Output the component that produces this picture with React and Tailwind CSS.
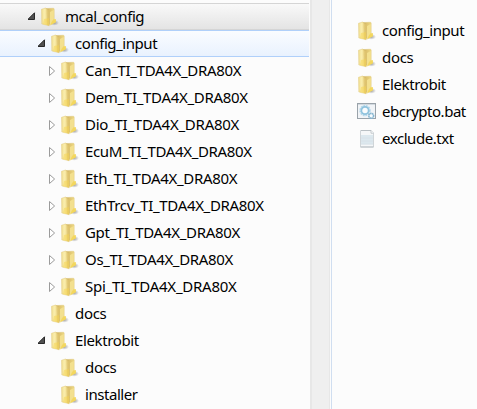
import React from "react";

const modules = [
  { name: "Can_TI_TDA4X_DRA80X", track: "tracking-[-0.32px]" },
  { name: "Dem_TI_TDA4X_DRA80X", track: "tracking-[-0.31px]" },
  { name: "Dio_TI_TDA4X_DRA80X", track: "tracking-[-0.26px]" },
  { name: "EcuM_TI_TDA4X_DRA80X", track: "tracking-[-0.34px]" },
  { name: "Eth_TI_TDA4X_DRA80X", track: "tracking-[-0.31px]" },
  { name: "EthTrcv_TI_TDA4X_DRA80X", track: "tracking-[-0.34px]" },
  { name: "Gpt_TI_TDA4X_DRA80X", track: "tracking-[-0.3px]" },
  { name: "Os_TI_TDA4X_DRA80X", track: "tracking-[-0.34px]" },
  { name: "Spi_TI_TDA4X_DRA80X", track: "tracking-[-0.26px]" },
];

const files = [
  { name: "config_input", track: "tracking-[-0.45px]", icon: Folder, inset: "pl-px" },
  { name: "docs", track: "tracking-[-0.3px]", icon: Folder, inset: "pl-px" },
  { name: "Elektrobit", track: "tracking-[-0.38px]", icon: Folder, inset: "pl-px" },
  { name: "ebcrypto.bat", track: "tracking-[-0.48px]", icon: BatIcon, inset: "" },
  { name: "exclude.txt", track: "tracking-[-0.45px]", icon: TextIcon, inset: "" },
];

function Folder() {
  return (
    <svg className="h-5 w-[18px] shrink-0" viewBox="0 0 18 20">
      <defs>
        <linearGradient id="cover" x1="0" x2="1" y1="0" y2="0">
          <stop offset="0" stopColor="#efdb8c" />
          <stop offset="0.35" stopColor="#faeeae" />
          <stop offset="1" stopColor="#ebd27a" />
        </linearGradient>
        <linearGradient id="page" x1="0" x2="1" y1="0" y2="0">
          <stop offset="0" stopColor="#bfa050" />
          <stop offset="0.45" stopColor="#dcc06c" />
          <stop offset="1" stopColor="#efda86" />
        </linearGradient>
        <radialGradient id="shade">
          <stop offset="0" stopColor="#777" stopOpacity="0.7" />
          <stop offset="1" stopColor="#777" stopOpacity="0" />
        </radialGradient>
      </defs>
      <ellipse cx="13.2" cy="15.8" rx="4.8" ry="2.9" fill="url(#shade)" />
      <path d="M3.8 1.6 12.6 1.2 13.2 2v13.3L8 17.6z" fill="url(#page)" stroke="#d8bf6e" strokeWidth="0.4" />
      <path d="M9 5 12.8 3v12.3L9 17.7z" fill="#f3e08f" />
      <path d="M12.2 12.6 14.8 12 15 15.2 9 18.4 10.6 15z" fill="#f3d75e" />
      <path d="M0.5 2.2 4.6 1 7.8 3.8 8.2 18.8 0.8 17z" fill="url(#cover)" stroke="#dfc673" strokeWidth="0.4" />
      <path d="M5.4 1.8 7.8 3.8 8.2 18.6 6 18z" fill="#cfae58" fillOpacity="0.4" />
      <path d="M3 12 8 11l.2 7.6L2 17.2z" fill="#f5d450" fillOpacity="0.5" />
    </svg>
  );
}

function Arrow({ open }) {
  return open ? (
    <svg className="h-[9px] w-[9px] shrink-0" viewBox="0 0 9 9">
      <path d="M6.5 0.8v6.7H-0.2z" fill="#505050" stroke="#292929" />
    </svg>
  ) : (
    <svg className="h-3 w-[9px] shrink-0" viewBox="0 0 9 12">
      <path d="M1.5 1.5 6.6 6 1.5 10.5z" fill="#fff" stroke="#9b9b9b" />
    </svg>
  );
}

function Row({ name, track, pad, arrow, tone = "" }) {
  return (
    <div className={`flex h-[27px] items-center ${pad} ${tone}`}>
      <span className="flex w-[13px] shrink-0">{arrow && <Arrow open={arrow === "open"} />}</span>
      <Folder />
      <span className={`ml-1.5 whitespace-nowrap ${track}`}>{name}</span>
    </div>
  );
}

function BatIcon() {
  return (
    <svg className="h-[18px] w-5" viewBox="0 0 20 18">
      <rect x="0.5" y="0.5" width="18" height="15" fill="#f1f4f7" stroke="#9aa3aa" />
      <path d="M1 1.5h17" stroke="#d3dae0" />
      <circle cx="8" cy="7.5" r="4.9" fill="none" stroke="#b4d8ea" strokeWidth="1.6" strokeDasharray="1.9 0.7" />
      <circle cx="8" cy="7.5" r="3.6" fill="#fafcfd" stroke="#8fc3de" strokeWidth="1.7" />
      <circle cx="14.2" cy="12.8" r="2.4" fill="#f8fcfe" stroke="#86b6d1" strokeWidth="1.6" strokeDasharray="1.5 0.3" />
    </svg>
  );
}

function TextIcon() {
  return (
    <svg className="h-[19px] w-5" viewBox="0 0 20 19">
      <path d="M3.5 1.5h10.7l2.3 2.5v14h-13z" fill="#f5f7f8" stroke="#d0d5d8" />
      <path d="M4 6h12v2.5H4zM4 9.5h12v2H4zM4 12.5h12v2H4z" fill="#dce8ee" />
      <path d="M4 9h12M4 12h12M4 15h12" stroke="#c5d5de" strokeWidth="0.8" />
      <path d="M4.5 1.5h9.5" stroke="#a3abb0" strokeDasharray="1 1" />
      <path d="M14 1.5v2.7h2.5" fill="#fff" stroke="#b8bec2" strokeWidth="0.8" />
      <path d="M3.5 18h13" stroke="#b9c1c6" />
    </svg>
  );
}

export default function App() {
  return (
    <div className="flex h-[409px] w-[477px] overflow-hidden bg-[#fcfcfc] font-['Noto_Sans',sans-serif] text-[15px] leading-[27px] text-black">
      <div className="w-[310px] shrink-0 pt-[3px]">
        <Row name="mcal_config" track="tracking-[-0.44px]" pad="pl-7" arrow="open" tone="mr-px border-y border-[#d5d5d5] bg-linear-to-b from-[#f9f9f9] to-[#e4e4e4]" />
        <Row name="config_input" track="tracking-[-0.45px]" pad="pl-[38px]" arrow="open" tone="mr-px border-y border-[#b0d0fa] bg-linear-to-b from-[#fafcff] to-[#e9f2fe]" />
        {modules.map((m) => (
          <Row key={m.name} {...m} pad="pl-12" arrow="closed" />
        ))}
        <Row name="docs" track="tracking-[-0.3px]" pad="pl-[38px]" />
        <Row name="Elektrobit" track="tracking-[-0.38px]" pad="pl-[38px]" arrow="open" />
        <Row name="docs" track="tracking-[-0.3px]" pad="pl-12" />
        <Row name="installer" track="tracking-[-0.45px]" pad="pl-12" />
      </div>
      <div className="w-5 shrink-0 border-r border-l-2 border-r-[#e7e7e7] border-l-[#e7e7e7] bg-[#efefef]" />
      <div className="w-0.5 shrink-0 border-r border-[#d0def0]" />
      <div className="flex-1 pt-[17px] pl-[25px]">
        {files.map(({ name, track, inset, icon: Icon }) => (
          <div key={name} className="flex h-[27px] items-center">
            <span className={`flex w-5 shrink-0 ${inset}`}>
              <Icon />
            </span>
            <span className={`ml-[5px] whitespace-nowrap ${track}`}>{name}</span>
          </div>
        ))}
      </div>
    </div>
  );
}
